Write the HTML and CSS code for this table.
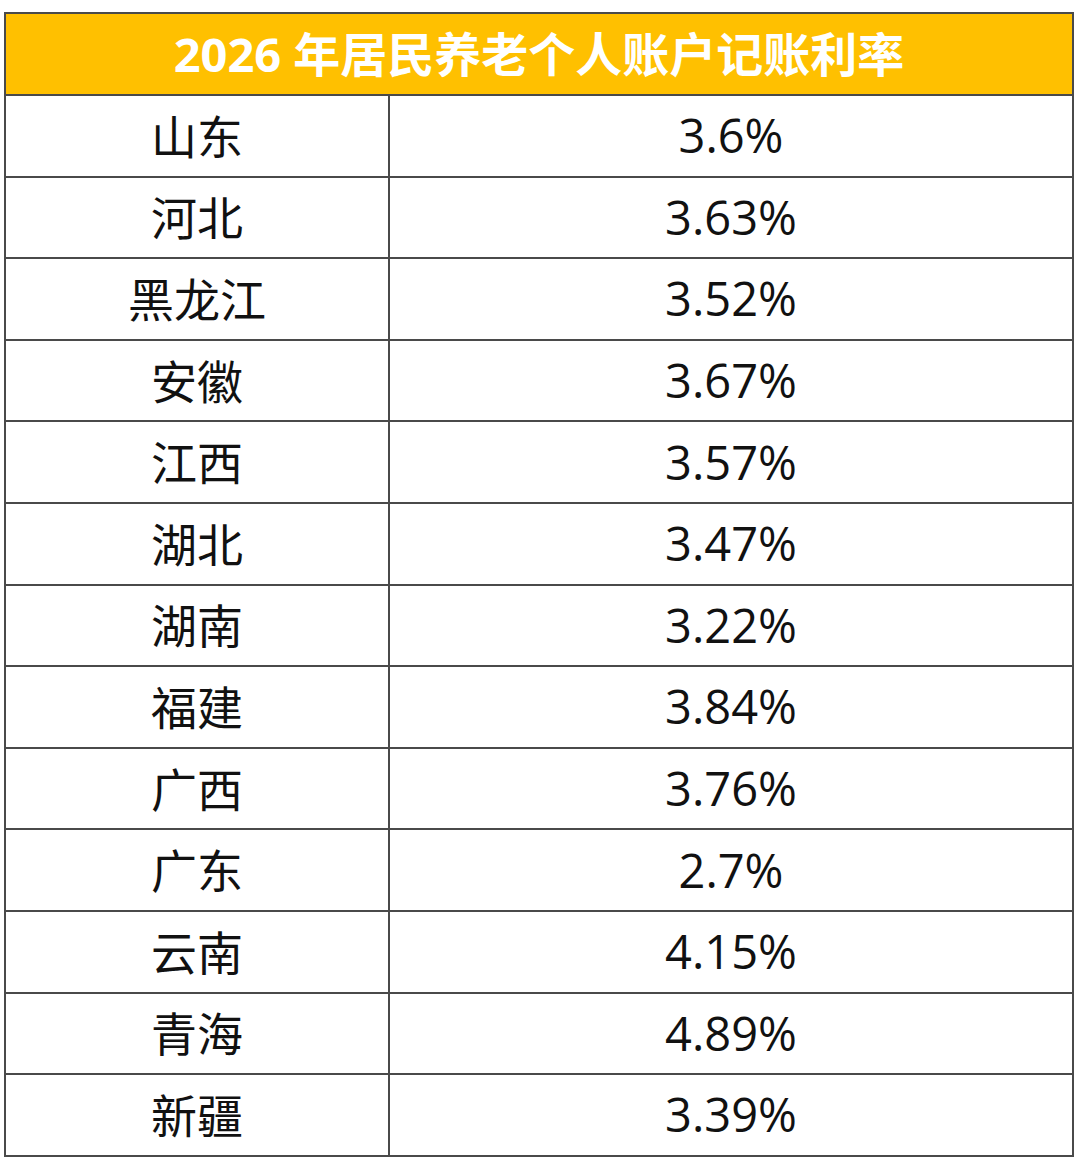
FILE: index.html
```html
<!DOCTYPE html>
<html lang="zh-CN">
<head>
<meta charset="utf-8">
<title>2026 年居民养老个人账户记账利率</title>
<link rel="stylesheet" href="styles.css">
</head>
<body>
<table class="rates">
  <colgroup>
    <col class="col-prov">
    <col class="col-rate">
  </colgroup>
  <thead>
    <tr class="head-row"><th colspan="2" class="title">2026 年居民养老个人账户记账利率</th></tr>
  </thead>
  <tbody>
    <tr><td class="prov">山东</td><td class="rate">3.6%</td></tr>
    <tr><td class="prov">河北</td><td class="rate">3.63%</td></tr>
    <tr><td class="prov">黑龙江</td><td class="rate">3.52%</td></tr>
    <tr><td class="prov">安徽</td><td class="rate">3.67%</td></tr>
    <tr><td class="prov">江西</td><td class="rate">3.57%</td></tr>
    <tr><td class="prov">湖北</td><td class="rate">3.47%</td></tr>
    <tr><td class="prov">湖南</td><td class="rate">3.22%</td></tr>
    <tr><td class="prov">福建</td><td class="rate">3.84%</td></tr>
    <tr><td class="prov">广西</td><td class="rate">3.76%</td></tr>
    <tr><td class="prov">广东</td><td class="rate">2.7%</td></tr>
    <tr><td class="prov">云南</td><td class="rate">4.15%</td></tr>
    <tr><td class="prov">青海</td><td class="rate">4.89%</td></tr>
    <tr><td class="prov">新疆</td><td class="rate">3.39%</td></tr>
  </tbody>
</table>
</body>
</html>
```

FILE: styles.css
```css
html, body {
  margin: 0;
  padding: 0;
  background: #ffffff;
}

body {
  padding: 12px 0 0 4px;
}

.rates {
  border-collapse: collapse;
  table-layout: fixed;
  width: 1070px;
  font-family: "Open Sans", "Noto Sans CJK SC", sans-serif;
  color: #111111;
}

.col-prov {
  width: 384px;
}

.rates th,
.rates td {
  border: 2px solid #4a4a4a;
  padding: 0;
  text-align: center;
  vertical-align: middle;
}

.head-row {
  height: 82px;
}

.title {
  background: #ffc000;
  color: #ffffff;
  font-weight: 700;
  font-size: 47px;
  line-height: 1;
}

.rates tbody tr {
  height: 81.6px;
}

.prov {
  font-size: 46px;
  line-height: 1;
}

.rate {
  font-size: 47px;
  line-height: 1;
}
```
